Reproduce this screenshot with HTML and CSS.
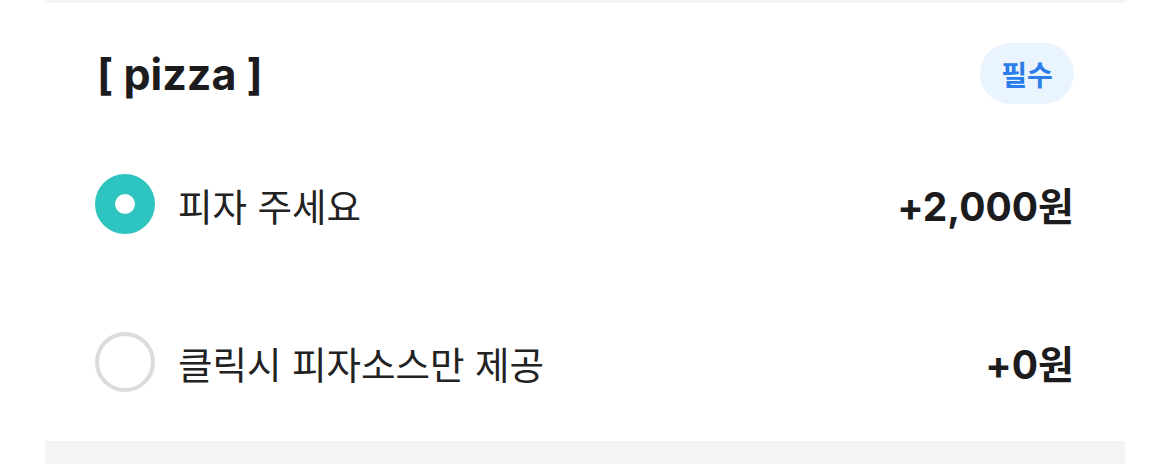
FILE: index.html
```html
<!DOCTYPE html>
<html lang="ko">
<head>
<meta charset="utf-8">
<link rel="stylesheet" href="styles.css">
</head>
<body>
<div class="sheet">
  <div class="top-strip"></div>
  <section class="option-group">
    <header class="group-head">
      <h2 class="group-title">[ pizza ]</h2>
      <span class="badge">필수</span>
    </header>
    <label class="option">
      <span class="radio radio-on"></span>
      <span class="option-name">피자 주세요</span>
      <span class="option-price">+2,000<span class="won">원</span></span>
    </label>
    <label class="option">
      <span class="radio"></span>
      <span class="option-name">클릭시 피자소스만 제공</span>
      <span class="option-price">+0<span class="won">원</span></span>
    </label>
  </section>
  <div class="bottom-strip"></div>
</div>
</body>
</html>
```

FILE: styles.css
```css
html, body {
  margin: 0;
  padding: 0;
  background: #ffffff;
}
body {
  font-family: Inter, "Noto Sans CJK KR", sans-serif;
  color: #1c1c1e;
}
.sheet {
  width: 1080px;
  margin-left: 45px;
  height: 464px;
  display: flex;
  flex-direction: column;
}
.top-strip {
  height: 3px;
  background: #f3f4f6;
}
.option-group {
  padding: 40px 52px 0 52px;
  display: flex;
  flex-direction: column;
}
.group-head {
  height: 61px;
  display: flex;
  align-items: center;
  justify-content: space-between;
  margin-bottom: 21px;
}
.group-title {
  margin: 0;
  font-size: 43px;
  font-weight: 700;
  color: #1c1c1e;
  line-height: 1;
  padding-top: 2px;
}
.badge {
  height: 61px;
  width: 94px;
  border-radius: 31px;
  background: #eaf4fe;
  color: #2b7de9;
  font-family: "Noto Sans CJK KR", sans-serif;
  font-weight: 700;
  font-size: 28px;
  display: flex;
  align-items: center;
  justify-content: center;
  margin-right: -1px;
}
.option {
  height: 158px;
  display: flex;
  align-items: center;
}
.radio {
  width: 60px;
  height: 60px;
  box-sizing: border-box;
  border-radius: 50%;
  border: 4px solid #dcdcde;
  margin-left: -2px;
  flex: none;
}
.radio-on {
  border: 20px solid #2ec4bf;
  background: #ffffff;
}
.option-name {
  margin-left: 23px;
  font-family: "Noto Sans CJK KR", sans-serif;
  font-size: 37.5px;
  color: #222222;
  flex: 1;
}
.option-price {
  font-size: 39px;
  font-weight: 700;
  color: #1c1c1e;
  margin-right: -1px;
}
.won {
  font-family: "Noto Sans CJK KR", sans-serif;
}
.bottom-strip {
  flex: 1;
  background: #f3f4f6;
}
```
